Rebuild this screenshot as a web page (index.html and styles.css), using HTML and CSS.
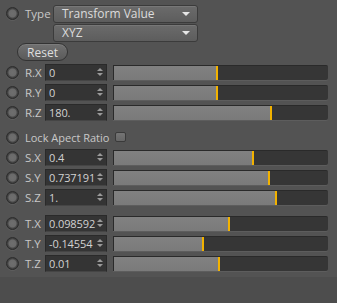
FILE: index.html
```html
<!DOCTYPE html>
<html lang="en">
<head>
    <meta charset="UTF-8">
    <title>Coordinates</title>
<link rel="stylesheet" href="styles.css">
</head>
<body>
<div class="panel">
    <div class="row typeRow">
        <span class="radio"></span>
        <span class="label">Type</span>
        <div class="dropdown">Transform Value<span class="arrow"></span></div>
    </div>
    <div class="row subRow">
        <div class="dropdown">XYZ<span class="arrow"></span></div>
    </div>
    <div class="resetRow">
        <button class="resetBtn">Reset</button>
    </div>

    <div class="group">
        <div class="row"><span class="radio"></span><span class="label">R.X</span>
            <div class="field">0<span class="spin"></span></div>
            <div class="slider"><div class="fill" style="width: 48.8%"></div></div></div>
        <div class="row"><span class="radio"></span><span class="label">R.Y</span>
            <div class="field">0<span class="spin"></span></div>
            <div class="slider"><div class="fill" style="width: 48.8%"></div></div></div>
        <div class="row"><span class="radio"></span><span class="label">R.Z</span>
            <div class="field">180.<span class="spin"></span></div>
            <div class="slider"><div class="fill" style="width: 73.8%"></div></div></div>
    </div>

    <div class="row lockRow">
        <span class="radio"></span>
        <span class="label">Lock Apect Ratio</span>
        <span class="check"></span>
    </div>
    <div class="group">
        <div class="row"><span class="radio"></span><span class="label">S.X</span>
            <div class="field">0.4<span class="spin"></span></div>
            <div class="slider"><div class="fill" style="width: 65.6%"></div></div></div>
        <div class="row"><span class="radio"></span><span class="label">S.Y</span>
            <div class="field">0.737191<span class="spin"></span></div>
            <div class="slider"><div class="fill" style="width: 73%"></div></div></div>
        <div class="row"><span class="radio"></span><span class="label">S.Z</span>
            <div class="field">1.<span class="spin"></span></div>
            <div class="slider"><div class="fill" style="width: 76.3%"></div></div></div>
    </div>

    <div class="group tGroup">
        <div class="row"><span class="radio"></span><span class="label">T.X</span>
            <div class="field">0.098592<span class="spin"></span></div>
            <div class="slider"><div class="fill" style="width: 54%"></div></div></div>
        <div class="row"><span class="radio"></span><span class="label">T.Y</span>
            <div class="field">-0.14554<span class="spin"></span></div>
            <div class="slider"><div class="fill" style="width: 41.9%"></div></div></div>
        <div class="row"><span class="radio"></span><span class="label">T.Z</span>
            <div class="field">0.01<span class="spin"></span></div>
            <div class="slider"><div class="fill" style="width: 49.3%"></div></div></div>
    </div>
</div>
</body>
</html>
```

FILE: styles.css
```css
html, body {
    margin: 0;
    padding: 0;
    background: #4d4d4d;
}
body {
    width: 337px;
    height: 303px;
    overflow: hidden;
    font-family: "Open Sans", "Noto Sans", sans-serif;
    font-size: 11px;
    color: #c8c8c8;
}
.panel {
    background: #535353;
    padding: 4px 0 4px 7px;
    height: 269px;
}
.row {
    display: flex;
    align-items: center;
    height: 20px;
}
.typeRow {
    height: 19px;
}
.subRow {
    padding-left: 46px;
}
.radio {
    box-sizing: border-box;
    width: 13px;
    height: 13px;
    margin-left: -1px;
    border-radius: 50%;
    border: 1px solid #2c2c2c;
    background: radial-gradient(circle, #6e6e6e 0, #6a6a6a 3.5px, #4a4a4a 4.5px, #3e3e3e 5.5px);
    box-shadow: 0 1px 0 #5f5f5f;
    flex: none;
}
.label {
    margin-left: 6px;
    width: 20px;
    font-size: 11.5px;
    white-space: nowrap;
}
.dropdown {
    position: relative;
    box-sizing: border-box;
    width: 145px;
    height: 18px;
    margin-left: 8px;
    padding-left: 8px;
    line-height: 16px;
    font-size: 12px;
    color: #dcdcdc;
    border: 1px solid #3b3b3b;
    border-radius: 3px;
    background: linear-gradient(#6b6b6b, #5d5d5d);
    box-shadow: inset 0 1px 0 #777;
}
.subRow .dropdown {
    margin-left: 0;
}
.arrow {
    position: absolute;
    right: 7px;
    top: 6px;
    width: 0;
    height: 0;
    border-left: 4px solid transparent;
    border-right: 4px solid transparent;
    border-top: 4px solid #e6e6e6;
}
.resetRow {
    height: 19px;
    padding-left: 10px;
}
.resetBtn {
    box-sizing: border-box;
    width: 51px;
    height: 18px;
    padding: 0;
    font-family: inherit;
    font-size: 12px;
    color: #dedede;
    border: 1px solid #333;
    border-radius: 9px;
    background: linear-gradient(#717171, #5a5a5a);
    box-shadow: inset 0 1px 0 #7c7c7c;
}
.field {
    position: relative;
    box-sizing: border-box;
    width: 62px;
    height: 17px;
    padding-left: 3px;
    line-height: 16px;
    font-size: 11px;
    letter-spacing: -0.1px;
    color: #d2d2d2;
    background: #343434;
    border: 1px solid #2a2a2a;
    border-bottom-color: #454545;
    white-space: nowrap;
}
.spin {
    position: absolute;
    right: 3px;
    top: 3px;
    width: 0;
    height: 0;
    border-left: 3px solid transparent;
    border-right: 3px solid transparent;
    border-bottom: 3px solid #9a9a9a;
}
.spin:after {
    content: "";
    position: absolute;
    left: -3px;
    top: 5px;
    border-left: 3px solid transparent;
    border-right: 3px solid transparent;
    border-top: 3px solid #9a9a9a;
}
.slider {
    box-sizing: border-box;
    width: 215px;
    height: 15px;
    margin-left: 6px;
    background: #363636;
    border-top: 1px solid #2a2a2a;
    border-left: 1px solid #2a2a2a;
    border-radius: 0 2px 2px 0;
    box-shadow: 0 1px 0 #5d5d5d;
}
.fill {
    height: 100%;
    box-sizing: border-box;
    background: linear-gradient(#818181, #7a7a7a);
    border-right: 2px solid #f2b200;
}
.lockRow {
    margin-top: 5px;
}
.lockRow .label {
    width: auto;
    font-size: 11px;
}
.check {
    box-sizing: border-box;
    width: 11px;
    height: 10px;
    margin-left: 6px;
    border: 1px solid #3a3a3a;
    border-radius: 2px;
    background: linear-gradient(#747474, #666);
}
.tGroup {
    margin-top: 6px;
}
```
